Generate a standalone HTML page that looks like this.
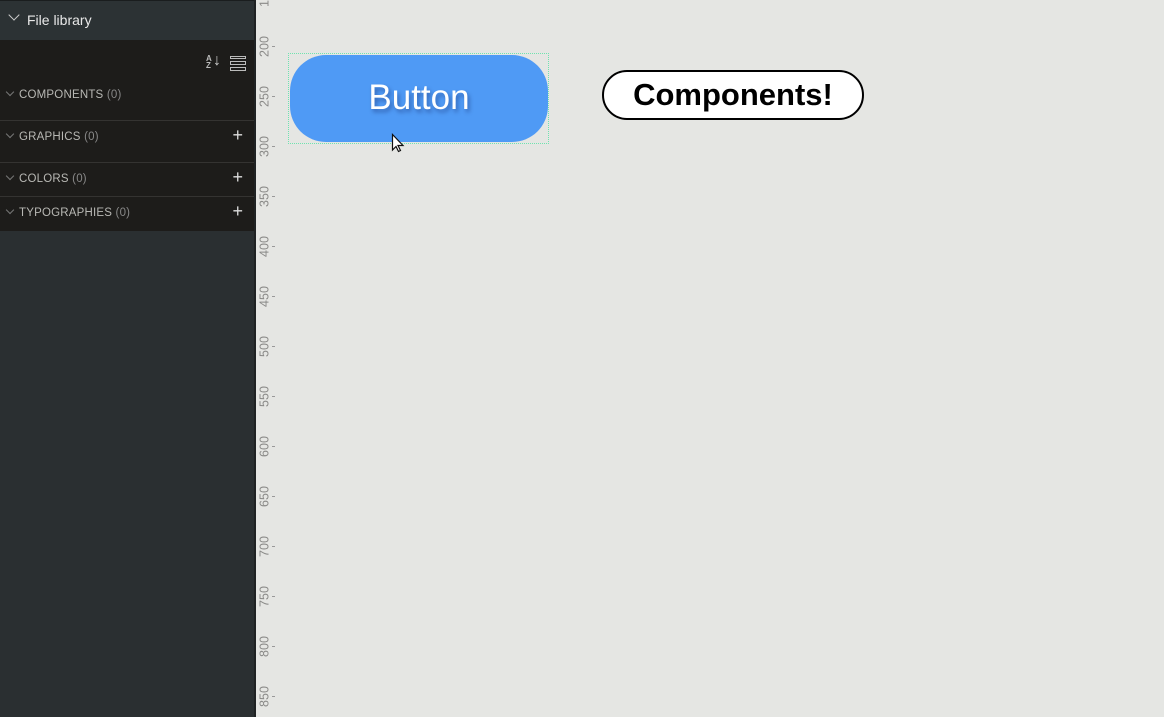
<!DOCTYPE html>
<html><head><style>
*{margin:0;padding:0;box-sizing:border-box}
body{width:1164px;height:717px;overflow:hidden;background:#e5e6e3;font-family:"Liberation Sans",sans-serif;position:relative}
#side{position:absolute;left:0;top:0;width:255px;height:717px;background:#2a2f31}
#hdr{position:absolute;left:0;top:0;width:254px;height:40px;background:#2c3234;border-top:1px solid #1a1d1e;color:#e8e8e8;font-size:14px}
#panel{position:absolute;left:0;top:40px;width:254px;height:191px;background:#1d1c1a}
.sec{position:absolute;left:0;width:254px;color:#b8b8b4;font-size:11.5px;letter-spacing:.2px}
.sec span{color:#888}
.line{position:absolute;left:0;width:254px;height:1px;background:#343331}
.plus{position:absolute;right:12px;color:#ddd;font-size:18px;font-weight:300}
.chev{position:absolute;left:7px;width:6px;height:6px;border-right:1px solid #777;border-bottom:1px solid #777;transform:rotate(45deg)}
.rl{position:absolute;left:257px;font-size:12.5px;color:#8a8a88;transform:rotate(-90deg);text-align:center;width:30px;margin-left:-7px;height:13px;line-height:13px}
.tk{position:absolute;left:272px;width:3px;height:1px;background:#999}
</style></head><body>
<div id="side">
<div id="hdr"><div style="position:absolute;left:10px;top:10px;width:8px;height:8px;border-right:1.3px solid #ccc;border-bottom:1.3px solid #ccc;transform:rotate(45deg)"></div><div style="position:absolute;left:27px;top:11px">File library</div></div>
<div id="panel">
<div style="position:absolute;left:206px;top:15px;font-size:8px;line-height:7px;color:#bbb;font-weight:bold">A<br>Z</div>
<div style="position:absolute;left:213px;top:12px;color:#ccc;font-size:16px">↓</div>
<div style="position:absolute;left:230px;top:16px;width:16px;height:3px;border:1px solid #bbb"></div>
<div style="position:absolute;left:230px;top:21px;width:16px;height:4px;border:1px solid #bbb"></div>
<div style="position:absolute;left:230px;top:27px;width:16px;height:4px;border:1px solid #bbb"></div>
</div>
<div class="chev" style="top:89px"></div><div class="sec" style="left:19px;top:89px">COMPONENTS <span>(0)</span></div>
<div class="line" style="top:120px"></div>
<div class="chev" style="top:131px"></div><div class="sec" style="left:19px;top:131px">GRAPHICS <span>(0)</span></div><div class="plus" style="top:125px">+</div>
<div class="line" style="top:162px"></div>
<div class="chev" style="top:173px"></div><div class="sec" style="left:19px;top:173px">COLORS <span>(0)</span></div><div class="plus" style="top:167px">+</div>
<div class="line" style="top:196px"></div>
<div class="chev" style="top:207px"></div><div class="sec" style="left:19px;top:207px">TYPOGRAPHIES <span>(0)</span></div><div class="plus" style="top:201px">+</div>
</div>
<div style="position:absolute;left:254px;top:0;width:2px;height:717px;background:#1f2223"></div>
<div class="rl" style="top:-10px">150</div><div class="tk" style="top:-4px"></div>
<div class="rl" style="top:40px">200</div><div class="tk" style="top:46px"></div>
<div class="rl" style="top:90px">250</div><div class="tk" style="top:96px"></div>
<div class="rl" style="top:140px">300</div><div class="tk" style="top:146px"></div>
<div class="rl" style="top:190px">350</div><div class="tk" style="top:196px"></div>
<div class="rl" style="top:240px">400</div><div class="tk" style="top:246px"></div>
<div class="rl" style="top:290px">450</div><div class="tk" style="top:296px"></div>
<div class="rl" style="top:340px">500</div><div class="tk" style="top:346px"></div>
<div class="rl" style="top:390px">550</div><div class="tk" style="top:396px"></div>
<div class="rl" style="top:440px">600</div><div class="tk" style="top:446px"></div>
<div class="rl" style="top:490px">650</div><div class="tk" style="top:496px"></div>
<div class="rl" style="top:540px">700</div><div class="tk" style="top:546px"></div>
<div class="rl" style="top:590px">750</div><div class="tk" style="top:596px"></div>
<div class="rl" style="top:640px">800</div><div class="tk" style="top:646px"></div>
<div class="rl" style="top:690px">850</div><div class="tk" style="top:696px"></div>
<div style="position:absolute;left:288px;top:53px;width:261px;height:91px;border:1px dotted #6fe3b0"></div>
<div style="position:absolute;left:290px;top:55px;width:258px;height:87px;border-radius:36px;background:#4f9af5;color:#fff;font-size:35px;text-align:center;line-height:85px;text-shadow:2px 3px 4px rgba(0,0,60,.35)">Button</div>
<svg style="position:absolute;left:391px;top:133px" width="16" height="20" viewBox="0 0 16 20"><path d="M1.5 1.5 L1.5 17 L5 13.5 L7.5 18.5 L9.5 17.5 L7 12.5 L12 12.5 Z" fill="#fff" stroke="#111" stroke-width="1.2"/></svg>
<div style="position:absolute;left:602px;top:70px;width:262px;height:50px;border:2px solid #000;border-radius:25px;background:#fff;color:#000;font-size:31px;font-weight:bold;text-align:center;line-height:46px">Components!</div>
</body></html>
